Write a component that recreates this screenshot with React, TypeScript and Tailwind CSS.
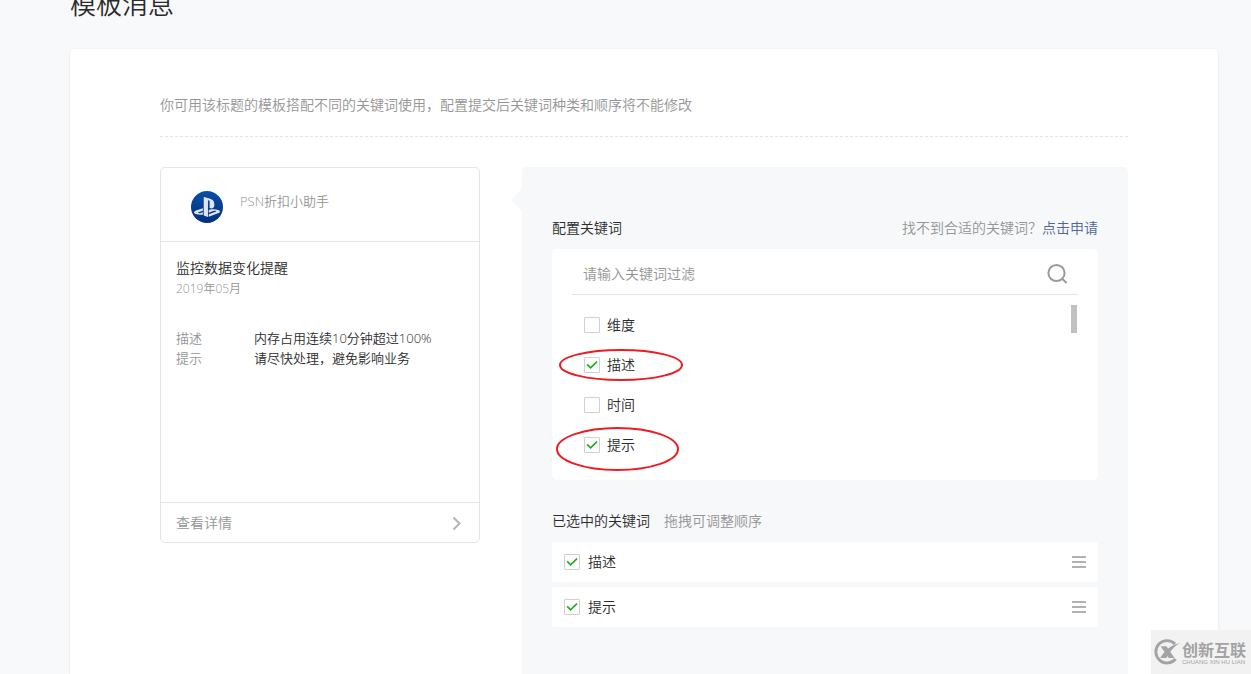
import { FaPlaystation } from 'react-icons/fa';

type Keyword = { id: string; label: string; checked: boolean; ring?: 'narrow' | 'tall' };

const keywords: Keyword[] = [
  { id: 'dimension', label: '维度', checked: false },
  { id: 'description', label: '描述', checked: true, ring: 'narrow' },
  { id: 'time', label: '时间', checked: false },
  { id: 'tip', label: '提示', checked: true, ring: 'tall' },
];

function Checkbox({ id, label, checked, gap }: { id: string; label: string; checked: boolean; gap: string }) {
  return (
    <label htmlFor={id} className={`flex items-center ${gap} text-sm`}>
      <span className="grid size-4">
        <input
          id={id}
          type="checkbox"
          defaultChecked={checked}
          className="peer col-start-1 row-start-1 size-4 appearance-none rounded-[1px] border border-[#d0d0d0] bg-white"
        />
        <svg
          viewBox="0 0 16 16"
          className="pointer-events-none col-start-1 row-start-1 hidden size-4 peer-checked:block"
          fill="none"
          stroke="#1aad19"
          strokeWidth="1.6"
        >
          <path d="M3.2 7.4 6.6 10.8 13 4.6" />
        </svg>
      </span>
      {label}
    </label>
  );
}

function Ring({ kind }: { kind: 'narrow' | 'tall' }) {
  return kind === 'narrow' ? (
    <svg className="pointer-events-none absolute top-1 left-[7px] h-8 w-[124px]" viewBox="0 0 124 32" fill="none">
      <ellipse cx="62" cy="16" rx="61" ry="15" stroke="#ed1c24" strokeWidth="2" />
    </svg>
  ) : (
    <svg className="pointer-events-none absolute top-[2px] left-1 h-11 w-[123px]" viewBox="0 0 123 44" fill="none">
      <ellipse cx="61.5" cy="22" rx="60.5" ry="21" stroke="#ed1c24" strokeWidth="2" />
    </svg>
  );
}

function TemplateCard() {
  return (
    <section className="w-80 shrink-0 rounded-[5px] border border-[#e4e5e7]">
      <header className="flex h-[74px] items-start border-b border-[#e4e5e7] pt-[23px] pl-[30px]">
        <span className="flex size-8 items-center justify-center rounded-full bg-linear-to-b from-[#0a4fa8] to-[#03307c] text-[#dfe4f0]">
          <FaPlaystation className="mb-px size-[26px]" />
        </span>
        <span className="ml-[17px] text-[13px] leading-5 text-[#959595]">PSN折扣小助手</span>
      </header>
      <div className="h-[260px] px-[15px] pt-4 leading-5">
        <h2 className="text-sm leading-5">监控数据变化提醒</h2>
        <p className="text-xs leading-[22px] text-[#959595]">2019年05月</p>
        <dl className="mt-7 grid grid-cols-[78px_1fr] text-[13px] leading-5">
          <dt className="text-[#959595]">描述</dt>
          <dd>内存占用连续10分钟超过100%</dd>
          <dt className="text-[#959595]">提示</dt>
          <dd>请尽快处理，避免影响业务</dd>
        </dl>
      </div>
      <a href="#detail" className="flex h-10 items-center justify-between border-t border-[#e4e5e7] pr-[17px] pl-[15px] text-sm text-[#959595]">
        查看详情
        <svg viewBox="0 0 10 14" className="h-3.5 w-2.5" fill="none" stroke="#b5b5b5" strokeWidth="2">
          <path d="M1.5 1.5 7.5 7.5 1.5 13.5" />
        </svg>
      </a>
    </section>
  );
}

function KeywordPanel() {
  return (
    <section className="relative min-w-0 flex-1 rounded-t-[5px] bg-[#f6f8fa] px-[30px] pt-[50px]">
      <svg className="absolute top-[21px] -left-[11px] h-[23px] w-[11px]" viewBox="0 0 11 23" fill="#f6f8fa">
        <path d="M11 0V23L0 11.5Z" />
      </svg>
      <div className="flex justify-between text-sm leading-[22px]">
        <h2>配置关键词</h2>
        <p className="text-[#959595]">
          找不到合适的关键词？
          <a href="#apply" className="text-[#50659a]">点击申请</a>
        </p>
      </div>
      <div className="mt-[10px] rounded-[5px] bg-white px-5 pb-[15px]">
        <div className="flex h-[46px] items-center border-b border-[#e4e5e7] pt-1 pr-[9px] pl-[11px]">
          <input
            type="text"
            aria-label="关键词过滤"
            placeholder="请输入关键词过滤"
            className="h-9 min-w-0 flex-1 bg-transparent text-sm outline-none placeholder:text-[#959595]"
          />
          <button type="button" aria-label="搜索" className="p-0">
            <svg viewBox="0 0 22 22" className="size-[22px]" fill="none" stroke="#9a9a9a" strokeWidth="2">
              <circle cx="9.5" cy="10" r="8.1" />
              <path d="M15 15.5 19.5 20" />
            </svg>
          </button>
        </div>
        <div className="flex items-start pt-[10px]">
          <ul className="-ml-5 flex-1">
            {keywords.map((k) => (
              <li key={k.id} className="relative flex h-10 items-center pl-8">
                <Checkbox id={`pick-${k.id}`} label={k.label} checked={k.checked} gap="gap-[7px]" />
                {k.ring && <Ring kind={k.ring} />}
              </li>
            ))}
          </ul>
          <span className="mr-px h-7 w-1.5 bg-[#c1c1c1]" />
        </div>
      </div>
      <h2 className="mt-[30px] text-sm leading-[22px]">
        已选中的关键词<span className="ml-3.5 text-[#959595]">拖拽可调整顺序</span>
      </h2>
      <ul className="mt-[10px] flex flex-col gap-[5px]">
        {keywords
          .filter((k) => k.checked)
          .map((k) => (
            <li key={k.id} className="flex h-10 items-center justify-between rounded-[3px] bg-white px-3">
              <Checkbox id={`chosen-${k.id}`} label={k.label} checked gap="gap-2" />
              <button type="button" aria-label="拖拽排序" className="flex w-3.5 cursor-move flex-col gap-[3px]">
                <span className="h-0.5 w-full bg-[#b2b2b2]" />
                <span className="h-0.5 w-full bg-[#b2b2b2]" />
                <span className="h-0.5 w-full bg-[#b2b2b2]" />
              </button>
            </li>
          ))}
      </ul>
    </section>
  );
}

function Watermark() {
  return (
    <div className="absolute right-0 bottom-0 flex h-11 w-[100px] items-center gap-[2px] bg-[#f2f2f2] pl-[3px] text-[#a3a3a3]">
      <svg viewBox="0 0 26 26" className="size-[26px] shrink-0" fill="none" stroke="currentColor">
        <path d="M21 4.9A11.2 11.2 0 1 0 21.6 20" strokeWidth="2.8" />
        <path d="M6.6 7.2H12.4L20.6 19H14.8Z" fill="currentColor" stroke="none" />
        <path d="M26 4.2C20.5 7 17 11 12.4 19H6.2C10 12.5 16.5 5.6 26 4.2Z" fill="currentColor" stroke="none" />
      </svg>
      <div className="pt-0.5 whitespace-nowrap">
        <p className="text-base leading-[18px] font-bold">创新互联</p>
        <p className="font-['Liberation_Sans'] text-[6px] leading-[7px] font-normal">CHUANG XIN HU LIAN</p>
      </div>
    </div>
  );
}

export default function App() {
  return (
    <div className="relative flex h-screen flex-col overflow-hidden bg-[#f8f9fb] pr-[33px] pl-[70px] font-['Open_Sans','Noto_Sans_CJK_SC',sans-serif] font-[350] text-[#2b2b2b]">
      <h1 className="-mt-3 mb-[29px] shrink-0 text-[26px] leading-8">模板消息</h1>
      <main className="flex flex-1 flex-col rounded-t-[4px] bg-white px-[90px] pt-[45px] shadow-[0_1px_2px_rgba(150,150,150,0.3)]">
        <p className="border-b border-dashed border-[#e4e5e7] pb-5 text-sm leading-[22px] text-[#959595]">
          你可用该标题的模板搭配不同的关键词使用，配置提交后关键词种类和顺序将不能修改
        </p>
        <div className="mt-[30px] flex flex-1 gap-[42px]">
          <div>
            <TemplateCard />
          </div>
          <KeywordPanel />
        </div>
      </main>
      <Watermark />
    </div>
  );
}
